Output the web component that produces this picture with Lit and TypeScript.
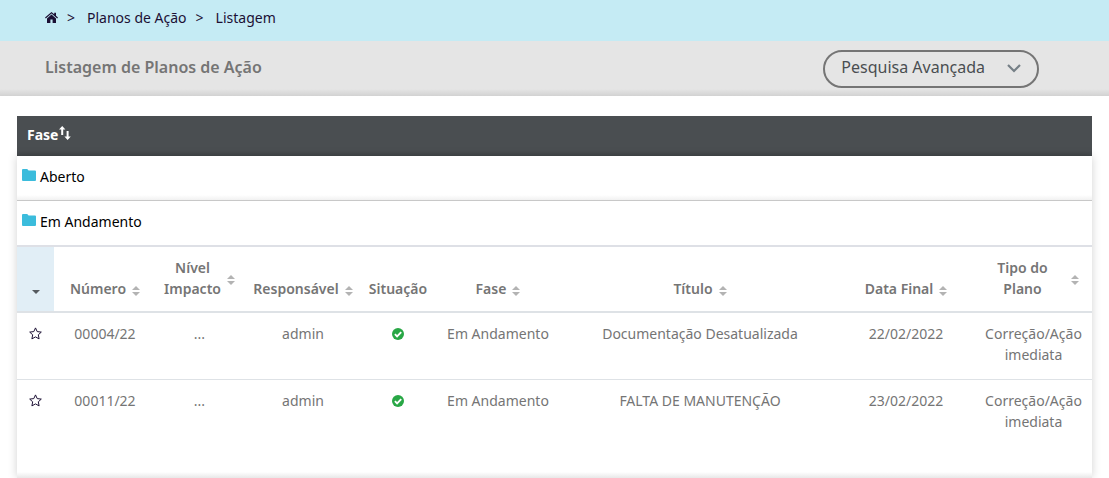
import { LitElement, html, css, svg, nothing } from "lit";
import { customElement, property } from "lit/decorators.js";

interface Column {
  label: string[];
  width: number;
  sortable?: boolean;
  wide?: boolean;
}

interface Plan {
  numero: string;
  impacto: string;
  responsavel: string;
  fase: string;
  titulo: string;
  data: string;
  tipo: string;
}

const COLUMNS: Column[] = [
  { label: ["Número"], width: 102, sortable: true },
  { label: ["Nível", "Impacto"], width: 87, sortable: true },
  { label: ["Responsável"], width: 120, sortable: true },
  { label: ["Situação"], width: 70 },
  { label: ["Fase"], width: 130, sortable: true },
  { label: ["Título"], width: 274, sortable: true },
  { label: ["Data Final"], width: 138, sortable: true },
  { label: ["Tipo do", "Plano"], width: 117, sortable: true, wide: true },
];
const MARK_WIDTH = 37;
const TOTAL = COLUMNS.reduce((sum, c) => sum + c.width, MARK_WIDTH);

const PLANS: Plan[] = [
  {
    numero: "00004/22", impacto: "...", responsavel: "admin", fase: "Em Andamento",
    titulo: "Documentação Desatualizada", data: "22/02/2022", tipo: "Correção/Ação imediata",
  },
  {
    numero: "00011/22", impacto: "...", responsavel: "admin", fase: "Em Andamento",
    titulo: "FALTA DE MANUTENÇÃO", data: "23/02/2022", tipo: "Correção/Ação imediata",
  },
];

const reset = css`
  * { box-sizing: border-box; }
  button {
    font: inherit;
    color: inherit;
    background: none;
    border: 0;
    padding: 0;
    cursor: pointer;
  }
  svg { display: block; flex: none; }
`;

@customElement("plan-table")
class PlanTable extends LitElement {
  @property({ attribute: false }) plans: Plan[] = [];

  static styles = [reset, css`
    :host { display: block; }
    table {
      width: 100%;
      table-layout: fixed;
      border-collapse: separate;
      border-spacing: 0;
      color: #757575;
      text-align: center;
    }
    th, td { padding: 0; }
    th {
      height: 68px;
      padding: 10px 0 12px;
      vertical-align: bottom;
      border-top: 2px solid #dee0e6;
      border-bottom: 2px solid #dee2e6;
      font-weight: 600;
    }
    .mark { background: #e1eef6; }
    .mark button { padding: 6px 10px 3px; }
    td { padding: 10px 8px 14px; vertical-align: top; }
    tr + tr td { border-top: 1px solid #dee2e6; }
    .sort { display: inline-flex; align-items: center; gap: 6px; }
    .single svg { margin-top: 5px; }
    .double svg { margin-top: 4px; }
    .wide { display: flex; width: 100%; padding: 0 13px 0 5px; }
    .wide span { flex: 1; }
    .star { color: #1c1034; padding: 4px 0 0; }
    .state { display: flex; justify-content: center; padding-top: 5px; }
  `];

  render() {
    return html`
      <table>
        <colgroup>
          <col style="width:${(MARK_WIDTH / TOTAL) * 100}%">
          ${COLUMNS.map((c) => html`<col style="width:${(c.width / TOTAL) * 100}%">`)}
        </colgroup>
        <thead>
          <tr>
            <th class="mark" scope="col">
              <button aria-label="Ordenar por favorito">
                <svg width="8" height="4" viewBox="0 0 8 4"><path d="M0 0h8L4 4z" fill="#555a5f"/></svg>
              </button>
            </th>
            ${COLUMNS.map((c) => html`<th scope="col">${this.heading(c)}</th>`)}
          </tr>
        </thead>
        <tbody>
          ${this.plans.map((p) => html`
            <tr>
              <td>
                <button class="star" aria-label="Favoritar ${p.numero}">
                  <svg width="13" height="13" viewBox="0 0 13 13">
                    <path d="M6.5 .9l1.7 3.7 4.1.5-3 2.7.8 4.1-3.6-2-3.6 2 .8-4.1-3-2.7 4.1-.5z"
                      fill="none" stroke="currentColor" stroke-linejoin="round"/>
                  </svg>
                </button>
              </td>
              <td>${p.numero}</td>
              <td>${p.impacto}</td>
              <td>${p.responsavel}</td>
              <td>
                <span class="state">
                  <svg width="12" height="12" viewBox="0 0 12 12" role="img" aria-label="Em dia">
                    <circle cx="6" cy="6" r="6" fill="#28a745"/>
                    <path d="M2.9 6.1l2.2 2.2 4.1-4.1" fill="none" stroke="#fff" stroke-width="1.9"/>
                  </svg>
                </span>
              </td>
              <td>${p.fase}</td>
              <td>${p.titulo}</td>
              <td>${p.data}</td>
              <td>${p.tipo}</td>
            </tr>`)}
        </tbody>
      </table>`;
  }

  private heading(c: Column) {
    const text = html`<span>${c.label.map((l, i) => html`${i ? html`<br>` : nothing}${l}`)}</span>`;
    if (!c.sortable) return text;
    const kind = c.label.length > 1 ? "double" : "single";
    return html`
      <button class="sort ${kind} ${c.wide ? "wide" : ""}">
        ${text}
        <svg width="8" height="10" viewBox="0 0 8 10">
          ${svg`<path d="M0 4l4-4 4 4zM0 6h8l-4 4z" fill="#b3b3b3"/>`}
        </svg>
      </button>`;
  }
}

@customElement("app-root")
class AppRoot extends LitElement {
  static styles = [reset, css`
    :host {
      display: block;
      font: 14px/21px "Noto Sans", "Open Sans", sans-serif;
      color: #000;
      background: #fff;
    }
    .crumbs {
      display: flex;
      align-items: center;
      height: 41px;
      padding: 0 45px 6px;
      background: #c5ebf4;
      color: #1c1034;
    }
    .crumbs a { color: inherit; text-decoration: none; }
    .crumbs .sep { margin: 0 12px 0 9px; }
    .titlebar {
      display: flex;
      align-items: center;
      justify-content: space-between;
      height: 55px;
      padding: 0 70px 0 45px;
      background: linear-gradient(#e5e5e5 48px, #d2d2d2);
    }
    h1 { margin: 0; padding-bottom: 3px; font-size: 16px; font-weight: 600; line-height: 24px; color: #757575; }
    .search {
      display: flex;
      align-items: center;
      gap: 22px;
      height: 38px;
      padding: 0 16px;
      border: 2px solid #757575;
      border-radius: 19px;
      color: #4a4e51;
      font-size: 16px;
      line-height: 24px;
    }
    .search span { padding-bottom: 4px; }
    .card { margin: 20px 17px 0; }
    .group-head {
      display: flex;
      align-items: center;
      gap: 1px;
      width: 100%;
      height: 40px;
      padding: 0 10px 4px;
      background: linear-gradient(#4a4e51 35px, #424649);
      color: #fff;
      font-weight: 700;
    }
    .group-head svg { margin-bottom: 3px; }
    .body {
      padding-bottom: 32px;
      background: linear-gradient(to top, #e8e8e8, #fff 6px);
      box-shadow: 0 0 9px rgba(0, 0, 0, 0.18);
    }
    .folder {
      display: flex;
      align-items: center;
      gap: 4px;
      width: 100%;
      height: 45px;
      padding: 0 5px 4px;
      border-bottom: 1px solid #c8c8c8;
      background: linear-gradient(#fff 39px, #f1f1f1);
    }
    .folder.open { height: 44px; border: 0; background: #fff; }
    .folder svg { margin-bottom: 3px; }
  `];

  render() {
    return html`
      <nav class="crumbs" aria-label="Navegação">
        <a href="#" aria-label="Início">
          <svg width="13" height="11" viewBox="0 0 13 11" fill="currentColor">
            <path d="M6.5 0L0 5.5l.8.9 5.7-4.8 5.7 4.8.8-.9-2-1.7V.8H9.2v1.5z"/>
            <path d="M6.5 2.6L2 6.4V11h3.4V7.6h2.2V11H11V6.4z"/>
          </svg>
        </a>
        <span class="sep">&gt;</span>
        <a href="#">Planos de Ação</a>
        <span class="sep">&gt;</span>
        <a href="#">Listagem</a>
      </nav>
      <header class="titlebar">
        <h1>Listagem de Planos de Ação</h1>
        <button class="search" aria-expanded="false">
          <span>Pesquisa Avançada</span>
          <svg width="14" height="9" viewBox="0 0 14 9">
            <path d="M1 1l6 6 6-6" fill="none" stroke="#757f86" stroke-width="2.2"/>
          </svg>
        </button>
      </header>
      <main class="card">
        <button class="group-head">
          <span>Fase</span>
          <svg width="12" height="14" viewBox="0 0 12 14" fill="#fff">
            <path d="M3.2 0L6.4 3.6H4.2V9H2.2V3.6H0z"/>
            <path d="M8.6 14l3.2-3.6H9.6V5h-2v5.4H5.4z"/>
          </svg>
        </button>
        <div class="body">
          <button class="folder">${this.folderIcon()}<span>Aberto</span></button>
          <button class="folder open" aria-expanded="true">${this.folderIcon()}<span>Em Andamento</span></button>
          <plan-table .plans=${PLANS}></plan-table>
        </div>
      </main>`;
  }

  private folderIcon() {
    return html`
      <svg width="14" height="12" viewBox="0 0 14 12">
        <path d="M1 0h4.2l1.4 1.4H13a1 1 0 0 1 1 1V11a1 1 0 0 1-1 1H1a1 1 0 0 1-1-1V1a1 1 0 0 1 1-1z" fill="#3bbcdc"/>
      </svg>`;
  }
}
